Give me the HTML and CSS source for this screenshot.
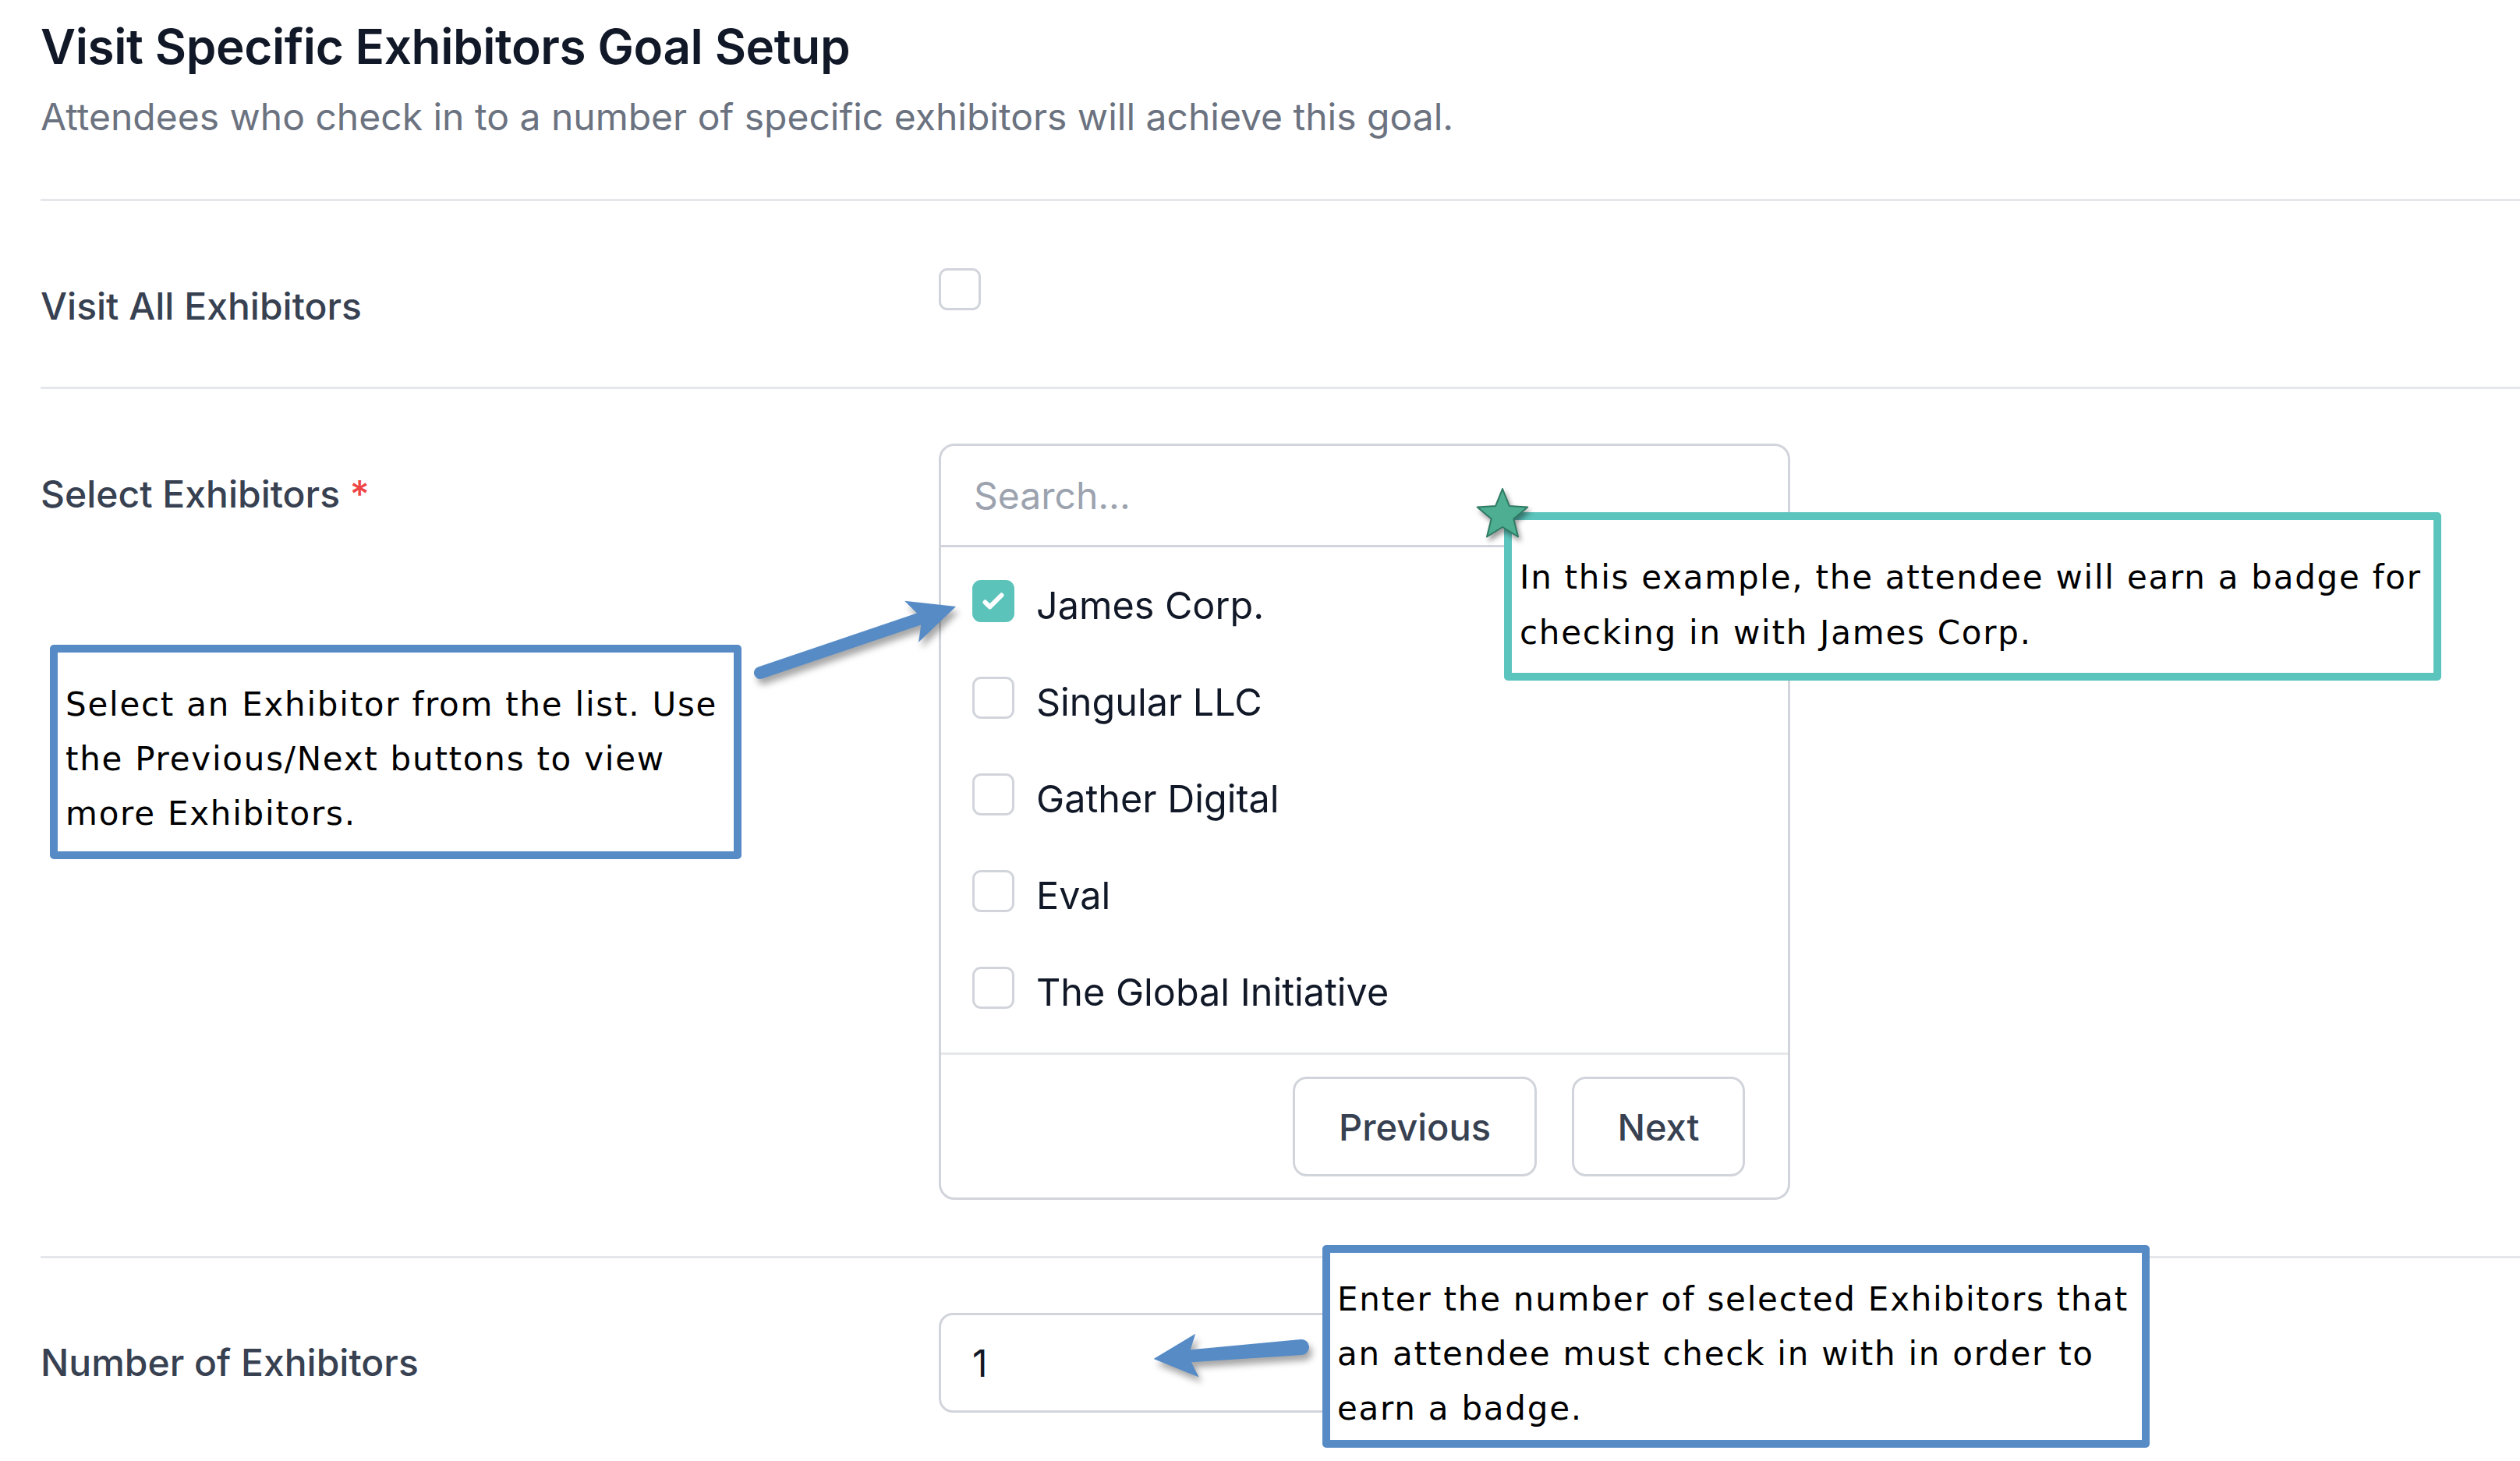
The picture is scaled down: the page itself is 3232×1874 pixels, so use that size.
FILE: index.html
```html
<!DOCTYPE html>
<html lang="en">
<head>
<meta charset="utf-8">
<title>Visit Specific Exhibitors Goal Setup</title>
<link rel="stylesheet" href="styles.css">
</head>
<body>
<div class="page">
  <header class="head">
    <h1 class="title">Visit Specific Exhibitors Goal Setup</h1>
    <p class="subtitle">Attendees who check in to a number of specific exhibitors will achieve this goal.</p>
  </header>

  <div class="row row-visit">
    <div class="label">Visit All Exhibitors</div>
    <div><span class="box"></span></div>
  </div>

  <div class="row row-select">
    <div class="label">Select Exhibitors <span class="req">*</span></div>
    <div class="picker">
      <input class="search" type="text" placeholder="Search...">
      <ul class="list">
        <li class="item"><span class="box checked"><svg viewBox="0 0 16 16" class="check"><path fill="#fff" d="M12.207 4.793a1 1 0 010 1.414l-5 5a1 1 0 01-1.414 0l-2-2a1 1 0 011.414-1.414L6.5 9.086l4.293-4.293a1 1 0 011.414 0z"/></svg></span><span class="name">James Corp.</span></li>
        <li class="item"><span class="box"></span><span class="name">Singular LLC</span></li>
        <li class="item"><span class="box"></span><span class="name">Gather Digital</span></li>
        <li class="item"><span class="box"></span><span class="name">Eval</span></li>
        <li class="item"><span class="box"></span><span class="name">The Global Initiative</span></li>
      </ul>
      <div class="pager">
        <button class="btn btn-prev">Previous</button>
        <button class="btn btn-next">Next</button>
      </div>
    </div>
  </div>

  <div class="row row-number">
    <div class="label">Number of Exhibitors</div>
    <div><input class="num" type="text" value="1"></div>
  </div>

  <div class="callout callout-left">Select an Exhibitor from the list. Use<br>the Previous/Next buttons to view<br>more Exhibitors.</div>
  <div class="callout callout-green">In this example, the attendee will earn a badge for<br>checking in with James Corp.</div>
  <div class="callout callout-bottom">Enter the number of selected Exhibitors that<br>an attendee must check in with in order to<br>earn a badge.</div>

  <svg class="overlay" viewBox="0 0 3232 1874" width="3232" height="1874">
    <path class="arrow" d="M972.4 855.4 L1176 786.4 L1160.1 770.7 L1226 778 L1178.1 823.7 L1181.2 801.6 L977.6 870.6 A8 8 0 0 1 972.4 855.4 Z"/>
    <path class="arrow" d="M1668.2 1718 L1526.8 1731.2 L1533.2 1710.7 L1479.6 1743 L1537.6 1766.5 L1528 1747.2 L1669.8 1738 A10 10 0 0 0 1668.2 1718 Z"/>
    <polygon class="star" points="1927,627 1935.8,648.9 1959.3,650.5 1941.3,665.6 1947,688.5 1927,676 1907,688.5 1912.7,665.6 1894.7,650.5 1918.2,648.9"/>
  </svg>
</div>
</body>
</html>
```
FILE: styles.css
```css
html, body {
  margin: 0;
  padding: 0;
  background: #ffffff;
}
body {
  font-family: Inter, "Noto Sans", sans-serif;
}
.page {
  position: relative;
  width: 3232px;
  height: 1874px;
  overflow: hidden;
  padding-left: 52px;
  box-sizing: border-box;
}
.head {
  padding: 22px 0 75px;
  border-bottom: 3px solid #e5e7eb;
}
.title {
  margin: 0;
  font-size: 62px;
  line-height: 76px;
  font-weight: 600;
  letter-spacing: -0.4px;
  color: #111827;
}
.subtitle {
  margin: 22px 0 0;
  font-size: 48px;
  line-height: 60px;
  color: #6b7280;
}
.row {
  display: grid;
  grid-template-columns: 1152px 1fr;
  align-items: start;
  border-bottom: 3px solid #e5e7eb;
}
.label {
  font-size: 48px;
  line-height: 60px;
  font-weight: 500;
  color: #374151;
}
.req {
  color: #ef4444;
}
.row-visit {
  padding: 86px 0 73px;
}
.row-visit .label {
  margin-top: 19px;
}
.row-select {
  padding: 70px 0 72px;
}
.row-select .label {
  margin-top: 35px;
}
.row-number {
  padding: 70px 0 60px;
  border-bottom: 0;
}
.row-number .label {
  margin-top: 34px;
}
.box {
  display: inline-flex;
  align-items: center;
  justify-content: center;
  width: 54px;
  height: 54px;
  box-sizing: border-box;
  border: 3px solid #d1d5db;
  border-radius: 11px;
  background: #fff;
  flex: none;
}
.box.checked {
  background: #5cc3bb;
  border-color: #5cc3bb;
}
.check {
  width: 54px;
  height: 54px;
}
.picker {
  width: 1092px;
  box-sizing: border-box;
  border: 3px solid #d1d5db;
  border-radius: 20px;
  background: #fff;
}
.search {
  display: block;
  width: 100%;
  height: 130px;
  box-sizing: border-box;
  border: 0;
  border-bottom: 3px solid #d1d5db;
  border-radius: 18px 18px 0 0;
  padding: 0 0 0 42px;
  margin: 0;
  font-family: Inter, "Noto Sans", sans-serif;
  font-size: 48px;
  color: #111827;
  background: transparent;
  outline: none;
}
.search::placeholder {
  color: #9ca3af;
}
.list {
  list-style: none;
  margin: 0;
  padding: 38px 0 52px 40px;
  display: flex;
  flex-direction: column;
  gap: 62px;
}
.item {
  display: flex;
  align-items: center;
  height: 62px;
  gap: 28px;
}
.name {
  font-size: 48.5px;
  line-height: 62px;
  color: #111827;
  margin-top: 12px;
}
.pager {
  display: flex;
  justify-content: flex-end;
  gap: 45px;
  padding: 28px 55px 27px 0;
  border-top: 3px solid #e5e7eb;
}
.btn {
  height: 128px;
  box-sizing: border-box;
  border: 3px solid #d1d5db;
  border-radius: 18px;
  background: #fff;
  font-family: Inter, "Noto Sans", sans-serif;
  font-size: 47px;
  font-weight: 500;
  color: #374151;
  padding: 0;
}
.btn-prev {
  width: 313px;
}
.btn-next {
  width: 222px;
}
.num {
  display: block;
  width: 1092px;
  height: 128px;
  box-sizing: border-box;
  border: 3px solid #d1d5db;
  border-radius: 18px;
  padding: 0 0 0 40px;
  margin: 0;
  font-family: Inter, "Noto Sans", sans-serif;
  font-size: 48px;
  color: #111827;
  outline: none;
}
.callout {
  position: absolute;
  box-sizing: border-box;
  background: #fff;
  border: 10px solid #568bc6;
  border-radius: 5px;
  font-family: "DejaVu Sans", Verdana, sans-serif;
  font-size: 42px;
  line-height: 70px;
  letter-spacing: 1.75px;
  color: #000;
  white-space: nowrap;
}
.callout-left {
  left: 64px;
  top: 827px;
  width: 887px;
  height: 275px;
  padding: 32px 0 0 10px;
}
.callout-green {
  left: 1929px;
  top: 657px;
  width: 1202px;
  height: 216px;
  border-color: #5bc4bc;
  padding: 38px 0 0 10px;
  line-height: 71px;
}
.callout-bottom {
  left: 1696px;
  top: 1597px;
  width: 1061px;
  height: 260px;
  padding: 25px 0 0 9px;
}
.overlay {
  position: absolute;
  left: 0;
  top: 0;
  pointer-events: none;
}
.arrow {
  fill: #568bc6;
  filter: drop-shadow(4px 7px 4px rgba(0, 0, 0, 0.35));
}
.star {
  fill: #4dae92;
  stroke: #2f7a63;
  stroke-width: 2;
  stroke-linejoin: round;
  filter: drop-shadow(3px 5px 3px rgba(0, 0, 0, 0.4));
}
```
